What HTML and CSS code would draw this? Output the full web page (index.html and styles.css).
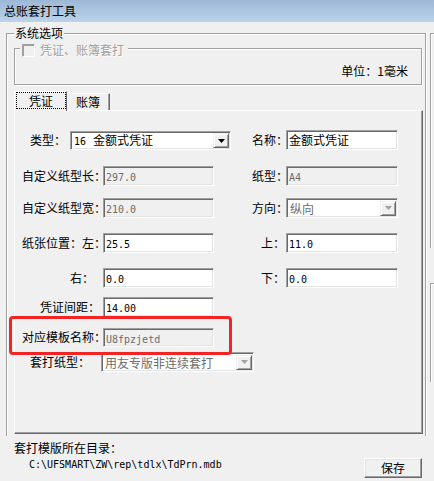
FILE: index.html
```html
<!DOCTYPE html>
<html lang="zh-CN">
<head>
<meta charset="utf-8">
<title>总账套打工具</title>
<link rel="stylesheet" href="styles.css">
</head>
<body>
<div class="titlebar">总账套打工具</div>
<div class="client">
  <div class="main">
    <div class="group outer">
      <div class="legend outer-legend">系统选项</div>
      <div class="group inner">
        <div class="legend check-legend"><span class="checkbox"></span><span class="disabled-text">凭证、账簿套打</span></div>
        <div class="unit">单位：1毫米</div>
      </div>
      <div class="tabs">
        <div class="tab active"><span class="focus">凭证</span></div>
        <div class="tab">账簿</div>
      </div>
      <div class="panel">
        <div class="row r1">
          <span class="lbl lbl-type">类型：</span>
          <div class="combo combo-type">
            <span class="val"><span class="num code">16</span>金额式凭证</span>
            <span class="drop"><svg width="7" height="4" viewBox="0 0 7 4"><polygon points="0,0 7,0 3.5,4" fill="#000"/></svg></span>
          </div>
          <span class="lbl rlbl-name">名称：</span>
          <div class="field field-r">金额式凭证</div>
        </div>
        <div class="row r2">
          <span class="lbl lbl-long">自定义纸型长：</span>
          <div class="field field-l dis"><span class="num">297.0</span></div>
          <span class="lbl rlbl">纸型：</span>
          <div class="field field-r dis"><span class="num">A4</span></div>
        </div>
        <div class="row r3">
          <span class="lbl lbl-long">自定义纸型宽：</span>
          <div class="field field-l dis"><span class="num">210.0</span></div>
          <span class="lbl rlbl">方向：</span>
          <div class="combo combo-dir dis">
            <span class="val">纵向</span>
            <span class="drop"><svg width="7" height="4" viewBox="0 0 7 4"><polygon points="0,0 7,0 3.5,4" fill="#a0a0a0"/></svg></span>
          </div>
        </div>
        <div class="row r4">
          <span class="lbl lbl-long">纸张位置：左：</span>
          <div class="field field-l"><span class="num">25.5</span></div>
          <span class="lbl rlbl-short">上：</span>
          <div class="field field-r"><span class="num">11.0</span></div>
        </div>
        <div class="row r5">
          <span class="lbl lbl-right">右：</span>
          <div class="field field-l"><span class="num">0.0</span></div>
          <span class="lbl rlbl-short">下：</span>
          <div class="field field-r"><span class="num">0.0</span></div>
        </div>
        <div class="row r6">
          <span class="lbl lbl-gap">凭证间距：</span>
          <div class="field field-l"><span class="num">14.00</span></div>
        </div>
        <div class="row r7 marked">
          <span class="lbl lbl-long">对应模板名称：</span>
          <div class="field field-l field-short dis"><span class="num">U8fpzjetd</span></div>
        </div>
        <div class="row r8">
          <span class="lbl lbl-kind">套打纸型：</span>
          <div class="combo combo-kind dis">
            <span class="val">用友专版非连续套打</span>
            <span class="drop"><svg width="7" height="4" viewBox="0 0 7 4"><polygon points="0,0 7,0 3.5,4" fill="#a0a0a0"/></svg></span>
          </div>
        </div>
      </div>
    </div>
    <div class="dir-label">套打模版所在目录：</div>
    <div class="bottom-row">
      <span class="path">C:\UFSMART\ZW\rep\tdlx\TdPrn.mdb</span>
      <button class="btn">保存</button>
    </div>
  </div>
  <div class="side">
    <div class="pane pane-top"></div>
    <div class="pane pane-bottom"></div>
  </div>
</div>
</body>
</html>
```

FILE: styles.css
```css
* { box-sizing: border-box; }
html, body { margin: 0; height: 481px; overflow: hidden; }
body {
  width: 434px;
  background: #f0f0f0;
  font-family: "Noto Sans CJK SC", sans-serif;
  font-size: 12px;
  color: #000;
}
.titlebar {
  height: 22px;
  padding: 4px 0 0 4px;
  line-height: 14px;
  background: linear-gradient(#9db8d6, #bbd3eb);
}
.client { display: flex; }
.main { flex: none; width: 426px; }
.group {
  border: 1px solid #a0a0a0;
  box-shadow: inset 1px 1px 0 #fff, 1px 1px 0 #fff;
}
.outer {
  height: 403px;
  margin: 11px 0 0 6px;
  border-bottom: none;
  box-shadow: inset 1px 1px 0 #fff, 1px 0 0 #fff;
}
.legend {
  width: max-content;
  line-height: 14px;
  background: #f0f0f0;
}
.outer-legend { margin: -8px 0 0 7px; padding: 0 1px; }
.inner {
  height: 37px;
  margin: 8px 3px 0 7px;
}
.check-legend {
  display: flex;
  align-items: center;
  gap: 5px;
  margin: -6px 0 0 5px;
  padding: 0 4px 0 2px;
}
.checkbox {
  width: 13px;
  height: 13px;
  border: 1px solid;
  border-color: #a0a0a0 #fff #fff #a0a0a0;
  box-shadow: inset 1px 1px 0 #a0a0a0;
  background: #f0f0f0;
}
.disabled-text { color: #a0a0a0; text-shadow: 1px 1px 0 #fff; }
.unit {
  margin-top: 7px;
  padding-right: 13px;
  line-height: 14px;
  text-align: right;
}
.tabs {
  display: flex;
  align-items: flex-end;
  height: 19px;
  margin: 6px 0 0 7px;
}
.tab {
  width: 43px;
  height: 17px;
  border-top: 1px solid #fff;
  border-right: 1px solid #696969;
  box-shadow: inset -1px 0 0 #a0a0a0;
  line-height: 15px;
  text-align: center;
}
.tab.active {
  position: relative;
  z-index: 1;
  width: 53px;
  height: 20px;
  margin-bottom: -1px;
  padding: 0 0 2px 1px;
  border-left: 1px solid #fff;
  background: #f0f0f0;
  box-shadow: none;
}
.focus {
  display: block;
  height: 17px;
  border: 1px dotted #000;
  line-height: 15px;
}
.panel {
  height: 324px;
  margin: 0 2px 0 7px;
  padding-top: 19px;
  border: 1px solid;
  border-color: #fff #696969 #696969 #fff;
  box-shadow: inset -1px -1px 0 #a0a0a0;
}
.row {
  display: flex;
  align-items: flex-end;
  height: 20px;
}
.r2 { margin-top: 16px; }
.r3 { margin-top: 12px; }
.r4 { margin-top: 15px; }
.r5 { margin-top: 15px; }
.r6 { margin-top: 9px; }
.r7 { margin-top: 10px; }
.r8 { margin-top: 5px; }
.lbl {
  flex: none;
  align-self: center;
  white-space: nowrap;
  line-height: 14px;
}
.lbl-type { width: 55px; padding-left: 15px; }
.lbl-long { width: 88px; padding-left: 7px; }
.lbl-right { width: 88px; padding-left: 55px; }
.lbl-gap { width: 88px; padding-left: 25px; }
.lbl-kind { width: 86px; padding-left: 15px; }
.rlbl-name { width: 55px; padding-left: 21px; }
.rlbl { width: 72px; padding-left: 38px; }
.rlbl-short { width: 72px; padding-left: 47px; }
.field {
  flex: none;
  height: 20px;
  padding: 0 1px 0 2px;
  border: 1px solid;
  border-color: #a0a0a0 #fff #fff #a0a0a0;
  box-shadow: inset 1px 1px 0 #696969, inset -1px -1px 0 #e3e3e3;
  background: #fff;
  line-height: 17px;
  white-space: nowrap;
  overflow: hidden;
}
.field-l { width: 111px; }
.field-r { width: 112px; }
.field-short { height: 19px; }
.dis { color: #6d6d6d; }
.field.dis { background: #f0f0f0; }
.num { font-family: "DejaVu Sans Mono", monospace; font-size: 10px; }
.code { margin-right: 7px; }
.combo {
  flex: none;
  display: flex;
  align-items: center;
  height: 19px;
  padding: 1px;
  border: 1px solid;
  border-color: #a0a0a0 #fff #fff #a0a0a0;
  box-shadow: inset 1px 1px 0 #696969, inset -1px -1px 0 #e3e3e3;
  background: #fff;
  white-space: nowrap;
}
.combo .val { flex: 1; padding-left: 2px; line-height: 15px; overflow: hidden; }
.combo .drop {
  flex: none;
  display: flex;
  align-items: center;
  justify-content: center;
  width: 16px;
  height: 15px;
  border: 1px solid;
  border-color: #f0f0f0 #696969 #696969 #f0f0f0;
  box-shadow: inset 1px 1px 0 #fff, inset -1px -1px 0 #a0a0a0;
  background: #f0f0f0;
}
.combo-type { width: 161px; }
.combo-dir { width: 112px; height: 20px; }
.combo-kind { width: 153px; height: 20px; }
.marked { position: relative; }
.marked::after {
  content: "";
  position: absolute;
  left: -6px;
  top: -11px;
  width: 217px;
  height: 33px;
  border: 3px solid #f52424;
  border-radius: 4px;
}
.dir-label {
  margin: 5px 0 0 14px;
  line-height: 14px;
}
.bottom-row {
  display: flex;
  align-items: flex-start;
  margin-left: 14px;
}
.path {
  flex: 1;
  margin-top: 3px;
  padding-left: 15px;
  font-family: "DejaVu Sans Mono", monospace;
  font-size: 10px;
  line-height: 14px;
  white-space: nowrap;
}
.btn {
  flex: none;
  width: 58px;
  height: 20px;
  margin: 3px 4px 0 0;
  padding: 0;
  border: 1px solid;
  border-color: #fff #696969 #696969 #fff;
  box-shadow: inset -1px -1px 0 #a0a0a0, inset 1px 1px 0 #e3e3e3;
  background: #f0f0f0;
  font-family: "Noto Sans CJK SC", sans-serif;
  font-size: 12px;
  line-height: 16px;
  color: #000;
}
.side {
  flex: 1;
  padding-left: 4px;
}
.pane {
  border-left: 1px solid #a0a0a0;
  border-top: 1px solid #a0a0a0;
  box-shadow: inset 1px 1px 0 #fff;
}
.pane-top { margin-top: 11px; height: 215px; }
.pane-bottom { margin-top: 35px; height: 99px; }
```
